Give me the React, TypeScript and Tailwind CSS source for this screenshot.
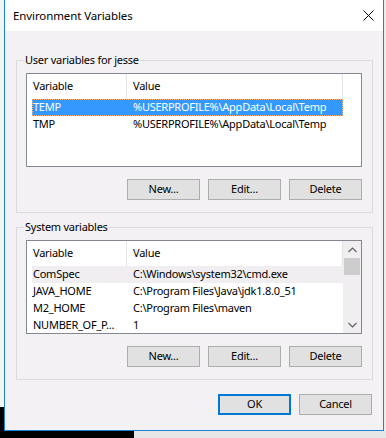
import React from "react";

type Row = { name: string; value: string; state?: "selected" | "inactive" };

const userVars: Row[] = [
  { name: "TEMP", value: "%USERPROFILE%\\AppData\\Local\\Temp", state: "selected" },
  { name: "TMP", value: "%USERPROFILE%\\AppData\\Local\\Temp" },
];

const systemVars: Row[] = [
  { name: "ComSpec", value: "C:\\Windows\\system32\\cmd.exe", state: "inactive" },
  { name: "JAVA_HOME", value: "C:\\Program Files\\Java\\jdk1.8.0_51" },
  { name: "M2_HOME", value: "C:\\Program Files\\maven" },
  { name: "NUMBER_OF_P...", value: "1" },
];

const Chevron = ({ up }: { up?: boolean }) => (
  <svg width="9" height="6" viewBox="0 0 9 6" className="block">
    <polyline
      points={up ? "0.5,5 4.5,1 8.5,5" : "0.5,1 4.5,5 8.5,1"}
      fill="none"
      stroke="#606060"
      strokeWidth="1.2"
    />
  </svg>
);

const WinButton = ({ label, primary }: { label: string; primary?: boolean }) => (
  <button
    type="button"
    className={`w-[73px] h-[21px] bg-[#e1e1e1] text-black flex items-center justify-center ${
      primary ? "border-2 border-[#0078d7]" : "border border-[#adadad]"
    }`}
  >
    {label}
  </button>
);

const VarList = ({ rows, scroll }: { rows: Row[]; scroll?: boolean }) => (
  <div className="w-[336px] h-[94px] border border-[#828790] bg-white flex overflow-hidden">
    <div className="w-[316px] flex flex-col">
      <div className="h-[25px] flex shrink-0">
        <div className="w-[100px] border-r border-[#e5e5e5] pl-[6px] flex items-center">Variable</div>
        <div className="w-[216px] border-r border-[#e5e5e5] pl-[6px] flex items-center">Value</div>
      </div>
      <div className="pl-[5px] flex flex-col">
        {rows.map((r) => (
          <div
            key={r.name}
            className={`h-[17px] w-[311px] flex items-center whitespace-nowrap ${
              r.state === "selected"
                ? "bg-[#3399ff] text-white outline-1 outline-dotted outline-offset-[-1px] outline-[#ffb070]"
                : r.state === "inactive"
                ? "bg-[#f0eef0]"
                : ""
            }`}
          >
            <span className="w-[100px] pl-[1px] shrink-0">{r.name}</span>
            <span className="pl-[1px]">{r.value}</span>
          </div>
        ))}
      </div>
    </div>
    {scroll && (
      <div className="w-[18px] bg-[#f0eef0] flex flex-col">
        <div className="h-[17px] flex items-center justify-center">
          <Chevron up />
        </div>
        <div className="h-[17px] mx-[1px] bg-[#cdcdcd]" />
        <div className="flex-1" />
        <div className="h-[17px] flex items-center justify-center">
          <Chevron />
        </div>
      </div>
    )}
  </div>
);

const GroupBox = ({
  title,
  rows,
  scroll,
  className,
}: {
  title: string;
  rows: Row[];
  scroll?: boolean;
  className?: string;
}) => (
  <div className={`relative ml-[11px] mr-[10px] border border-[#dcdadc] pt-[12px] pb-[12px] pl-[9px] ${className ?? ""}`}>
    <span className="absolute left-[7px] top-[-9px] px-[1px] bg-[#f4f1f4] leading-[16px]">{title}</span>
    <VarList rows={rows} scroll={scroll} />
    <div className="mt-[12px] w-[336px] flex justify-end gap-[8px]">
      <WinButton label="New..." />
      <WinButton label="Edit..." />
      <WinButton label="Delete" />
    </div>
  </div>
);

export default function App() {
  return (
    <div className="w-[386px] h-[438px] overflow-hidden flex flex-col bg-[#ececec] text-[11px] tracking-[-0.25px] text-black font-['Noto_Sans',sans-serif]">
      <div className="flex h-[431px]">
        <div className="w-[4px] flex flex-col">
          <div className="flex-1 bg-[#f4f4f4]" />
          <div className="h-[24px] bg-black" />
        </div>
        <div className="w-[380px] border-x border-b border-[#1883d7] flex flex-col">
          <div className="h-[31px] bg-white flex items-center justify-between pl-[8px] pr-[9px]">
            <span className="text-[11.5px] tracking-[-0.1px]">Environment Variables</span>
            <svg width="11" height="11" viewBox="0 0 11 11">
              <path d="M0.5 0.5 L10.5 10.5 M10.5 0.5 L0.5 10.5" stroke="#000" strokeWidth="1" />
            </svg>
          </div>
          <div className="flex-1 bg-[#f4f1f4] flex flex-col pt-[29px]">
            <GroupBox title="User variables for jesse" rows={userVars} />
            <GroupBox title="System variables" rows={systemVars} scroll className="mt-[14px]" />
            <div className="mt-[14px] flex justify-end gap-[8px] pr-[11px]">
              <WinButton label="OK" primary />
              <WinButton label="Cancel" />
            </div>
          </div>
        </div>
        <div className="w-[2px] bg-[#ececec]" />
      </div>
      <div className="h-[7px] flex">
        <div className="w-[134px] bg-black" />
        <div className="flex-1 bg-[#e6e6e6]" />
      </div>
    </div>
  );
}
